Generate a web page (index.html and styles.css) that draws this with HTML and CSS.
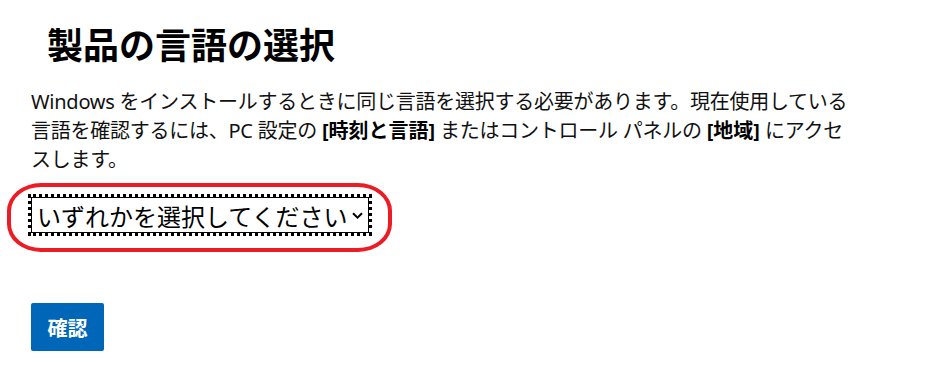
FILE: index.html
```html
<!DOCTYPE html>
<html lang="ja">

<head>
    <meta charset="utf-8">
    <title>製品の言語の選択</title>
    <link rel="stylesheet" href="styles.css">
</head>

<body>

    <div class="container">
        <h2 class="page-title">製品の言語の選択</h2>

        <p class="intro">
            Windows をインストールするときに同じ言語を選択する必要があります。現在使用している言語を確認するには、PC 設定の <b>[時刻と言語]</b> またはコントロール パネルの <b>[地域]</b> にアクセスします。
        </p>

        <div class="highlight">
            <div class="select-box">
                <select id="productLanguage">
                    <option value="">いずれかを選択してください</option>
                    <option value="ja">日本語</option>
                    <option value="en">英語</option>
                </select>
                <svg class="chevron" width="11" height="7" viewBox="0 0 11 7">
                    <path d="M1 1.2 L5.5 5.6 L10 1.2" fill="none" stroke="#000" stroke-width="2" />
                </svg>
            </div>
        </div>

        <button class="confirm-btn" id="confirmBtn">確認</button>
    </div>

</body>

</html>
```

FILE: styles.css
```css
body {
    margin: 0;
    font-family: "Noto Sans", "Noto Sans CJK JP", sans-serif;
    background-color: #fff;
    color: #000;
}

.container {
    padding: 24px 0 0 31px;
}

.page-title {
    margin: 0;
    padding-left: 16px;
    font-size: 36px;
    line-height: 43px;
    font-weight: bold;
}

.intro {
    max-width: 822px;
    margin: 20px 0 0 0;
    font-size: 20px;
    line-height: 29px;
    letter-spacing: -0.25px;
    color: #111;
}

.intro b {
    color: #000;
    letter-spacing: 0;
}

.highlight {
    display: inline-block;
    margin: 9px 0 0 -24px;
    padding: 10px 19px 15px 20px;
    border: 4px solid #ec1c24;
    border-radius: 34px / 28px;
}

.select-box {
    display: flex;
    align-items: center;
    width: 336px;
    height: 34px;
    border: 1px solid #000;
    outline: 3px dotted #000;
}

.select-box select {
    appearance: none;
    -webkit-appearance: none;
    flex: 1;
    height: 100%;
    border: none;
    outline: none;
    background: transparent;
    padding: 0 0 0 5px;
    font-family: "Noto Sans CJK JP", sans-serif;
    font-size: 24px;
    color: #000;
}

.chevron {
    margin-right: 5px;
}

.confirm-btn {
    display: block;
    margin-top: 51px;
    width: 73px;
    height: 48px;
    border: none;
    border-radius: 2px;
    background-color: #0067b8;
    color: #fff;
    font-family: "Noto Sans CJK JP", sans-serif;
    font-size: 20px;
    font-weight: bold;
    cursor: pointer;
}
```
